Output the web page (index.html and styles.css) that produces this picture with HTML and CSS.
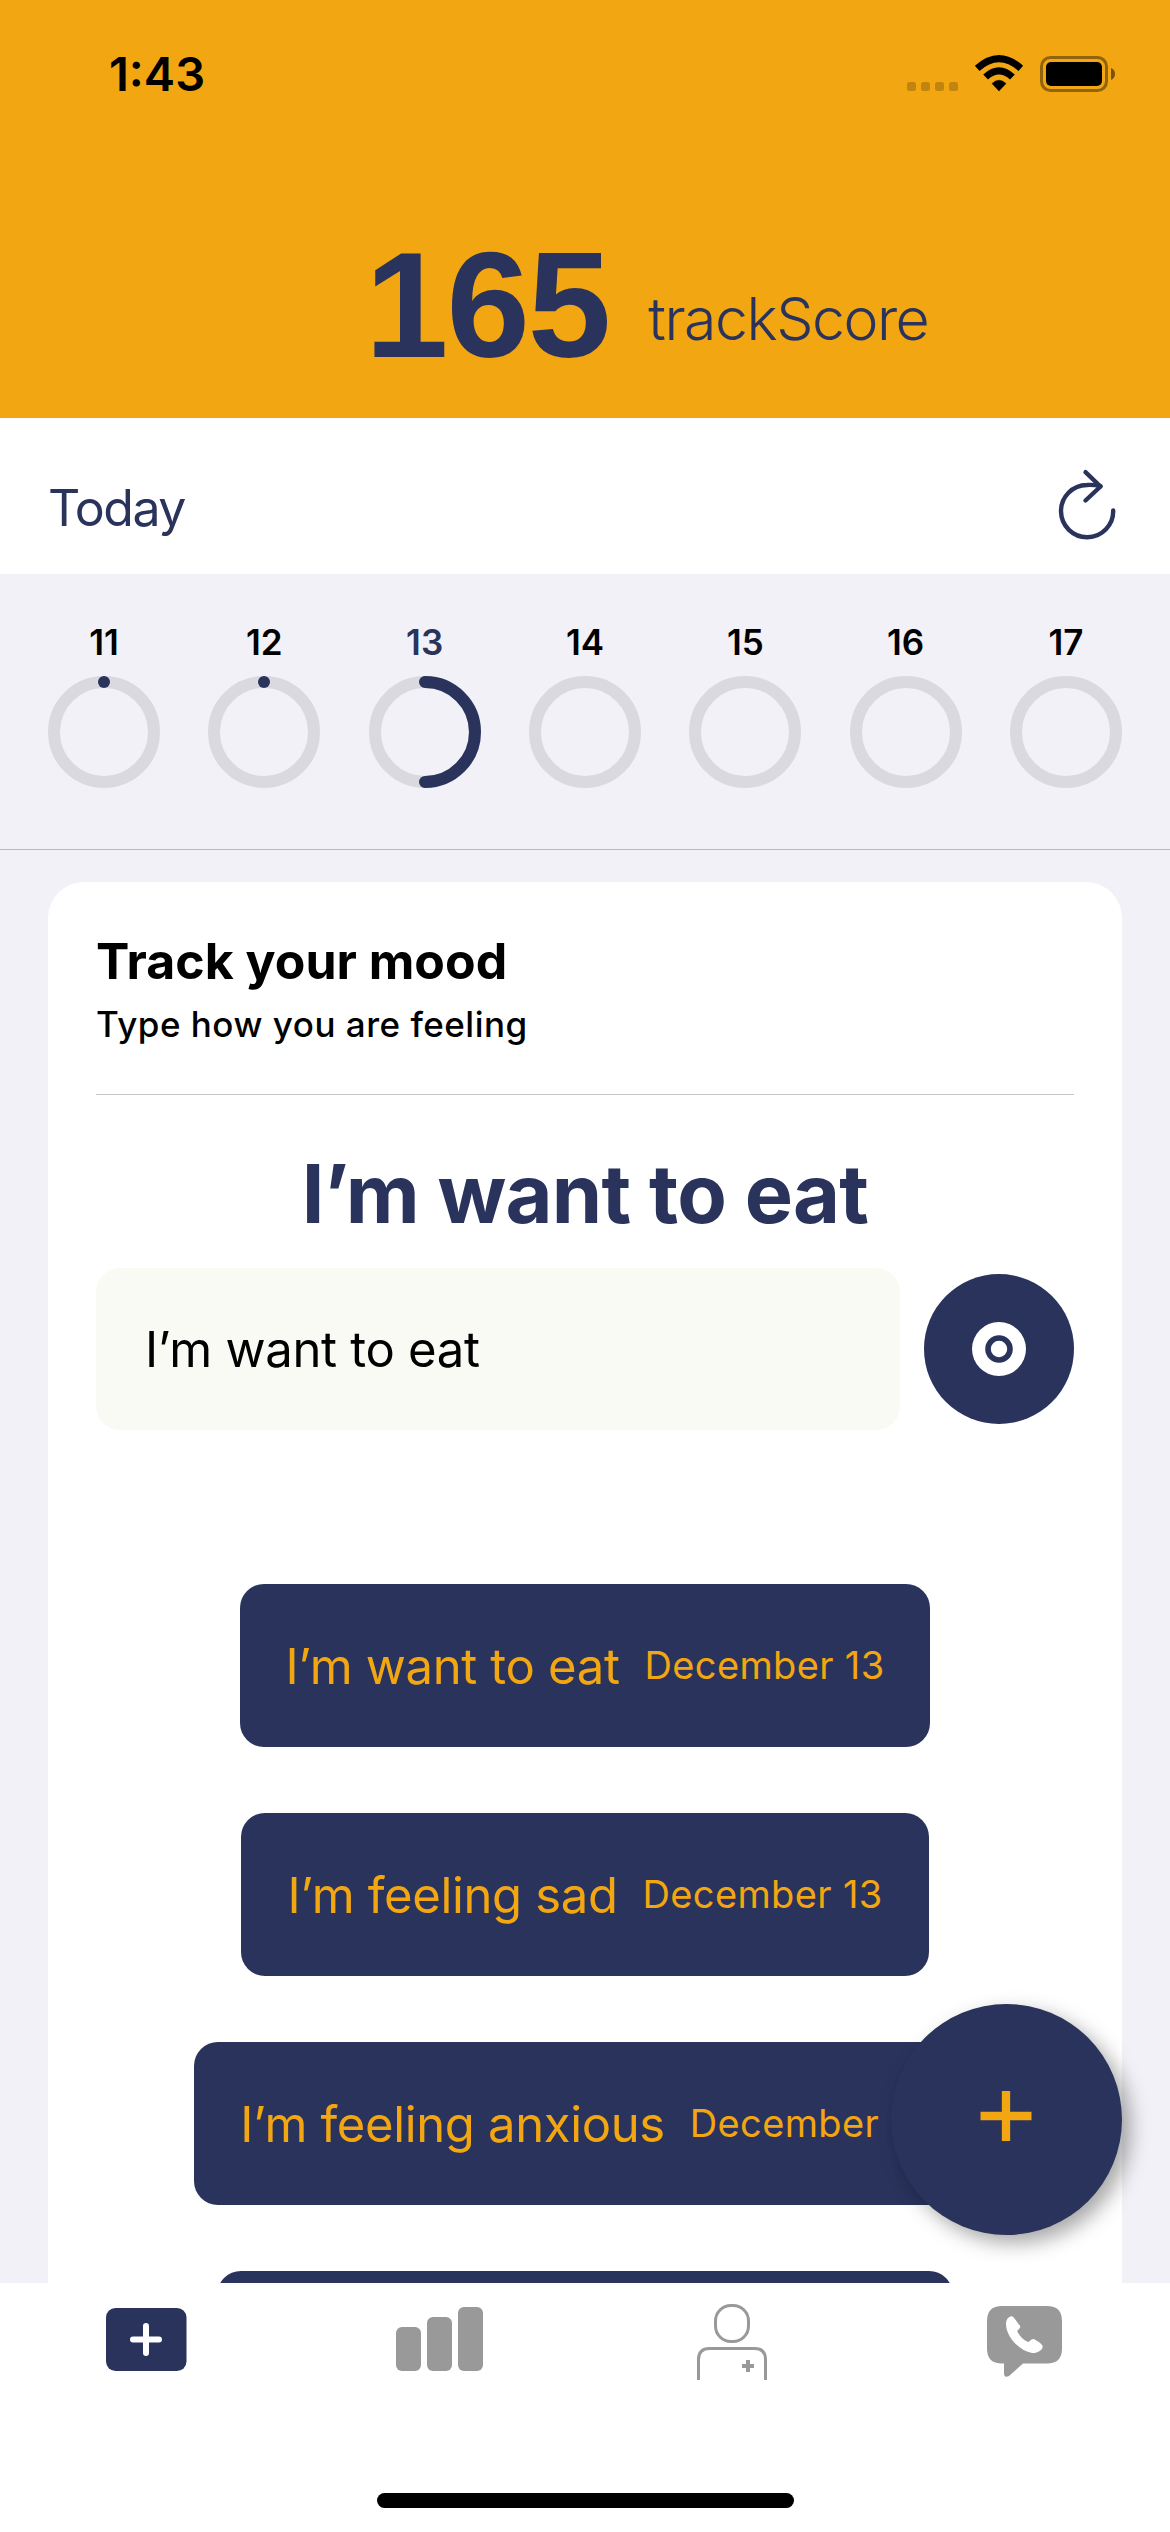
FILE: index.html
```html
<!DOCTYPE html>
<html lang="en">
<head>
<meta charset="utf-8">
<title>trackScore</title>
<link rel="stylesheet" href="styles.css">
</head>
<body>
<div class="screen">
  <header class="header">
    <div class="status">
      <span class="time">1:43</span>
      <svg class="status-icons" width="210" height="40" viewBox="906 54 210 40">
        <g fill="#000" fill-opacity=".2"><rect x="907" y="82" width="9" height="9" rx="2.5"/><rect x="921" y="82" width="9" height="9" rx="2.5"/><rect x="935" y="82" width="9" height="9" rx="2.5"/><rect x="949" y="82" width="9" height="9" rx="2.5"/></g>
        <path d="M999 91 L992 83.5 Q999 77 1006 83.5 Z" stroke="#000" stroke-width=".5"/>
        <path d="M985.6 77 Q999 64.6 1012.4 77" fill="none" stroke="#000" stroke-width="7"/>
        <path d="M977.2 68.4 Q999 48.8 1020.8 68.4" fill="none" stroke="#000" stroke-width="7"/>
        <rect x="1041.5" y="57.5" width="65" height="33" rx="9" fill="none" stroke="#000" stroke-opacity=".4" stroke-width="3"/>
        <rect x="1046" y="62" width="56" height="24" rx="5"/>
        <path d="M1111 68 Q1115 69.500 1115 74 Q1115 78 1111 80 Z" fill-opacity=".5"/>
      </svg>
    </div>
    <div class="score"><span class="score-value">165</span><span class="score-label">trackScore</span></div>
  </header>

  <section class="today">
    <span>Today</span>
    <svg width="62" height="74" viewBox="1056 468 62 74" fill="none" stroke="#29335c" stroke-width="4.4" stroke-linecap="round" stroke-linejoin="round"><path d="M1113.200 510.500 A26.100 26.100 0 1 1 1087 485 Q1094 484.600 1100.500 486.200"/><path d="M1085.500 472.200 L1100.500 486.500 L1085.500 500.500"/></svg>
  </section>

  <section class="days">
    <div class="day"><span>11</span><svg class="ring" viewBox="0 0 112 112"><circle class="track" cx="56" cy="56" r="50"/><circle class="dot" cx="56" cy="6" r="6"/></svg></div>
    <div class="day"><span>12</span><svg class="ring" viewBox="0 0 112 112"><circle class="track" cx="56" cy="56" r="50"/><circle class="dot" cx="56" cy="6" r="6"/></svg></div>
    <div class="day current"><span>13</span><svg class="ring" viewBox="0 0 112 112"><circle class="track" cx="56" cy="56" r="50"/><path class="arc" d="M56 6 A50 50 0 0 1 56 106"/></svg></div>
    <div class="day"><span>14</span><svg class="ring" viewBox="0 0 112 112"><circle class="track" cx="56" cy="56" r="50"/></svg></div>
    <div class="day"><span>15</span><svg class="ring" viewBox="0 0 112 112"><circle class="track" cx="56" cy="56" r="50"/></svg></div>
    <div class="day"><span>16</span><svg class="ring" viewBox="0 0 112 112"><circle class="track" cx="56" cy="56" r="50"/></svg></div>
    <div class="day"><span>17</span><svg class="ring" viewBox="0 0 112 112"><circle class="track" cx="56" cy="56" r="50"/></svg></div>
  </section>

  <main class="content">
    <div class="card">
      <h1 class="card-title">Track your mood</h1>
      <p class="card-sub">Type how you are feeling</p>
      <hr class="divider">
      <h2 class="mood">I’m want to eat</h2>
      <div class="entry">
        <div class="field">I’m want to eat</div>
        <button class="submit" aria-label="Save"><svg width="54" height="54" viewBox="0 0 54 54"><circle cx="27" cy="27" r="27" fill="#fff"/><circle cx="27" cy="27" r="11" fill="none" stroke="#29335c" stroke-width="5.600"/></svg></button>
      </div>
      <div class="log">
        <div class="pill"><span class="pill-text">I’m want to eat</span><span class="pill-date">December 13</span></div>
        <div class="pill"><span class="pill-text">I’m feeling sad</span><span class="pill-date">December 13</span></div>
        <div class="pill"><span class="pill-text">I’m feeling anxious</span><span class="pill-date">December 13</span></div>
        <div class="pill partial"></div>
      </div>
    </div>
    <button class="fab" aria-label="Add"><svg width="52" height="50" viewBox="0 0 52 50"><path d="M.5 25H51.500M26 0V50" stroke="#f2a612" stroke-width="8.300"/></svg></button>
  </main>

  <nav class="tabs">
    <div class="icons">
      <svg class="tab-add" width="81" height="63" viewBox="0 0 81 63"><rect width="80.500" height="63" rx="9.500" fill="#29335c"/><path d="M27 31.500H53M40 18V45" stroke="#fff" stroke-width="6" stroke-linecap="round"/></svg>
      <svg class="tab-stats" width="87" height="64" viewBox="0 0 87 64" fill="#999"><rect y="20" width="25" height="44" rx="6"/><rect x="31" y="10" width="25" height="54" rx="6"/><rect x="62" width="25" height="64" rx="6"/></svg>
      <svg class="tab-doctor" width="70" height="76" viewBox="697 2304 70 76" fill="none" stroke="#999" stroke-width="3"><rect x="715.500" y="2305.500" width="33" height="36" rx="15.500" ry="15.500"/><path d="M698.500 2380V2359.500Q698.500 2348.500 709.500 2348.500H754.500Q765.500 2348.500 765.500 2359.500V2380"/><path d="M742 2366H754M748 2360V2372" stroke-width="4"/></svg>
      <svg class="tab-call" width="75" height="72" viewBox="987 2306 75 72"><path fill="#999" d="M1002 2306H1047Q1062 2306 1062 2321V2348.500Q1062 2363.500 1047 2363.500H1023L1009 2376Q1004 2378.500 1004 2373V2363.500H1002Q987 2363.500 987 2348.500V2321Q987 2306 1002 2306Z"/><path fill="#fff" d="M1011.500 2316.300C1013.500 2316.300 1015 2319.500 1020.200 2326C1021 2328.500 1017 2329.500 1017.300 2331.500C1020 2336.500 1023.500 2340 1028 2342C1030 2341.500 1031 2338.500 1034 2339C1038 2341.500 1042.500 2344 1042.700 2346.500C1042.700 2350 1037.500 2353.400 1032 2353C1019 2350.500 1006 2336.500 1006 2324C1006 2320 1008.500 2316.300 1011.500 2316.300Z"/></svg>
    </div>
    <div class="home"></div>
  </nav>
</div>
</body>
</html>
```
FILE: styles.css
```css
* { box-sizing: border-box; margin: 0; padding: 0; }
body { font-family: Inter, "Liberation Sans", sans-serif; color: #000; background: #fff; }
svg { display: block; flex: none; }
button { border: 0; }
.screen { width: 1170px; height: 2532px; overflow: hidden; display: flex; flex-direction: column; white-space: nowrap; }

.header { height: 418px; flex: none; background: #f2a612; }
.status { height: 230px; padding: 54px 54px 0 109px; display: flex; justify-content: space-between; align-items: flex-start; }
.time { font-size: 47px; line-height: 40px; font-weight: 600; }
.score { display: flex; align-items: flex-start; color: #29335c; padding-left: 365px; }
.score-value { font: bold 150px/150px "Liberation Sans", sans-serif; letter-spacing: -2px; }
.score-label { font-size: 59px; line-height: 70px; font-weight: 300; letter-spacing: -1.5px; margin: 54px 0 0 39px; }

.today { height: 156px; flex: none; padding: 50px 52px 0 48px; display: flex; justify-content: space-between; align-items: flex-start; font-size: 50px; line-height: 80px; letter-spacing: -1.5px; color: #29335c; }

.days { height: 276px; flex: none; padding: 46px 48px 0; background: #f2f1f7; border-bottom: 1px solid #bbbabf; display: flex; justify-content: space-between; }
.day { width: 112px; text-align: center; font-size: 35px; line-height: 44px; font-weight: 600; }
.day span { display: block; }
.current { color: #29335c; }
.ring { width: 112px; height: 112px; margin-top: 12px; }
.track { fill: none; stroke: #dad9de; stroke-width: 12; }
.dot { fill: #29335c; }
.arc { fill: none; stroke: #29335c; stroke-width: 12; stroke-linecap: round; }

.content { position: relative; height: 1433px; flex: none; padding: 32px 48px 0; background: #f2f1f7; overflow: hidden; }
.card { height: 1500px; padding: 49px 48px 0; background: #fff; border-radius: 36px; }
.card-title { font-size: 50px; line-height: 60px; font-weight: 700; }
.card-sub { font-size: 35px; line-height: 44px; font-weight: 500; letter-spacing: .5px; margin-top: 11px; }
.divider { height: 1px; border: 0; background: #c6c6c8; margin-top: 48px; }
.mood { font-size: 81px; line-height: 100px; font-weight: 700; letter-spacing: -.7px; color: #29335c; text-align: center; margin-top: 49px; }
.entry { margin-top: 24px; height: 162px; display: flex; gap: 24px; align-items: center; }
.field { width: 804px; height: 162px; border-radius: 24px; background: #f9faf4; padding-left: 49px; font-size: 49px; line-height: 164px; letter-spacing: -.3px; }
.submit { width: 150px; height: 150px; border-radius: 50%; background: #29335c; display: flex; align-items: center; justify-content: center; }
.log { margin-top: 154px; display: flex; flex-direction: column; align-items: center; gap: 66px; }
.pill { height: 163px; flex: none; padding: 0 46px; border-radius: 24px; background: #29335c; color: #f2a612; display: flex; gap: 25px; }
.pill-text { font-size: 49px; line-height: 165px; letter-spacing: -.35px; }
.pill-date { font-size: 38px; line-height: 163px; letter-spacing: .35px; }
.partial { width: 736px; }
.fab { position: absolute; left: 891px; top: 1154px; width: 231px; height: 231px; border-radius: 50%; background: #29335c; box-shadow: 8px 8px 20px rgba(0, 0, 0, .35); display: flex; align-items: center; justify-content: center; padding: 0 1px 7px 0; }

.tabs { height: 249px; background: #fff; padding-top: 21px; }
.icons { height: 189px; padding-left: 106px; display: flex; align-items: flex-start; }
.tab-add { margin-top: 4px; }
.tab-stats { margin: 3px 0 0 209px; }
.tab-doctor { margin-left: 214px; }
.tab-call { margin: 2px 0 0 220px; }
.home { width: 417px; height: 15px; border-radius: 8px; background: #000; margin: 0 auto; }
```
